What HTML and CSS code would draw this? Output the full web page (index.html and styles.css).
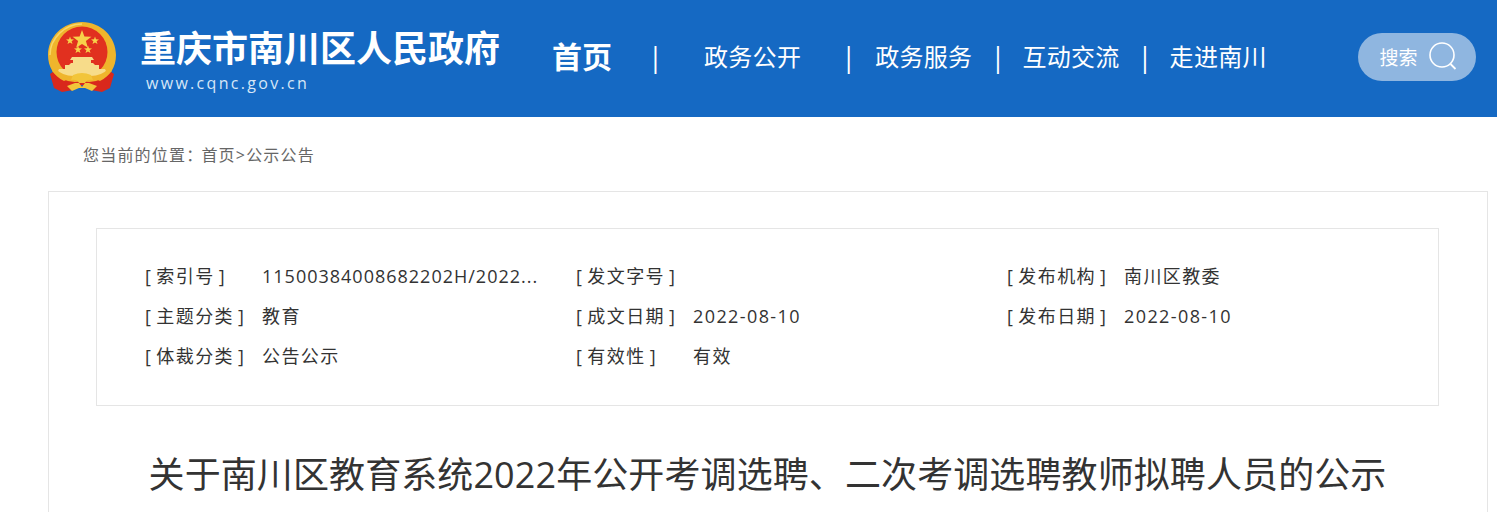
FILE: index.html
```html
<!DOCTYPE html>
<html lang="zh-CN">
<head>
<meta charset="utf-8">
<title>关于南川区教育系统2022年公开考调选聘、二次考调选聘教师拟聘人员的公示</title>
<link rel="stylesheet" href="styles.css">
</head>
<body>
<header class="header">
  <a class="brand">
    <svg class="emblem" viewBox="0 0 70 72" width="70" height="72" aria-hidden="true">
      <path d="M10 48 L3 53 L7 67 L15 71 L26 69 L35 64 L44 69 L55 71 L63 67 L67 53 L60 48 Z" fill="#d9281c"/>
      <path d="M35 1 C16 1 1 16 1 34 C1 46 7 55 17 60 L26 56 L44 56 L53 60 C63 55 69 46 69 34 C69 16 54 1 35 1Z" fill="#efb52c"/>
      <path d="M35 3 C18 3 3 17 3 34" fill="none" stroke="#f8d768" stroke-width="1.5"/>
      <circle cx="35" cy="31" r="25.5" fill="#e1301f"/>
      <path d="M35 9 l2.4 6.6 7 .2-5.5 4.3 2 6.7-5.9-3.9-5.9 3.9 2-6.7-5.5-4.3 7-.2z" fill="#f7d24a"/>
      <path d="M23 15.500 l1 2.800 3 .1-2.400 1.800 .9 2.900-2.500-1.700-2.500 1.700 .9-2.900-2.400-1.800 3-.1z" fill="#f7d24a"/>
      <path d="M48 15.500 l1 2.800 3 .1-2.400 1.800 .9 2.900-2.500-1.700-2.500 1.700 .9-2.900-2.400-1.800 3-.1z" fill="#f7d24a"/>
      <path d="M31 24.500 l1 2.800 3 .1-2.400 1.800 .9 2.900-2.500-1.700-2.500 1.700 .9-2.900-2.400-1.800 3-.1z" fill="#f7d24a"/>
      <path d="M41 24.500 l1 2.800 3 .1-2.400 1.800 .9 2.900-2.500-1.700-2.500 1.700 .9-2.900-2.400-1.800 3-.1z" fill="#f7d24a"/>
      <path d="M25 36 H45 L47 39 H44 V42 H46 L48 44 H52 V48 H58 L60 52 L52 56 H18 L10 52 L12 48 H18 V44 H22 L24 42 H26 V39 H23Z" fill="#f7dc8a"/>
      <path d="M8 47 Q18 58 35 54 Q52 58 62 47 L65 50 Q52 64 35 60 Q18 64 5 50Z" fill="#efb52c"/>
      <path d="M26 54 Q35 50 44 54 L46 59 Q40 58 38 62 H32 Q30 58 24 59Z" fill="#f2c53a"/>
      <path d="M20 65 L28 62 L32 62 L35 66 L38 62 L42 62 L50 65 L45 70 L38 67 H32 L25 70Z" fill="#f2c53a"/>
    </svg>
    <div class="brand-text">
      <div class="brand-name">重庆市南川区人民政府</div>
      <div class="brand-url">www.cqnc.gov.cn</div>
    </div>
  </a>
  <nav class="nav">
    <a class="nav-home">首页</a>
    <span class="sep sep-a">|</span>
    <a>政务公开</a>
    <span class="sep sep-b">|</span>
    <a>政务服务</a>
    <span class="sep">|</span>
    <a>互动交流</a>
    <span class="sep">|</span>
    <a>走进南川</a>
  </nav>
  <div class="search">
    <span>搜索</span>
    <svg viewBox="0 0 30 30" width="30" height="30" aria-hidden="true">
      <circle cx="14" cy="13" r="12" fill="none" stroke="#fff" stroke-width="1.6"/>
      <path d="M22.500 22 L27.500 27" stroke="#fff" stroke-width="1.800" fill="none"/>
    </svg>
  </div>
</header>
<div class="crumb">您当前的位置：<span class="crumb-links">首页&gt;公示公告</span></div>
<main class="panel">
  <section class="meta">
    <div class="meta-item"><span class="label">[ 索引号 ]</span><span class="value value-code">11500384008682202H/2022...</span></div>
    <div class="meta-item"><span class="label">[ 发文字号 ]</span><span class="value"></span></div>
    <div class="meta-item"><span class="label">[ 发布机构 ]</span><span class="value">南川区教委</span></div>
    <div class="meta-item"><span class="label">[ 主题分类 ]</span><span class="value">教育</span></div>
    <div class="meta-item"><span class="label">[ 成文日期 ]</span><span class="value">2022-08-10</span></div>
    <div class="meta-item"><span class="label">[ 发布日期 ]</span><span class="value">2022-08-10</span></div>
    <div class="meta-item"><span class="label">[ 体裁分类 ]</span><span class="value">公告公示</span></div>
    <div class="meta-item"><span class="label">[ 有效性 ]</span><span class="value">有效</span></div>
  </section>
  <h1 class="title">关于南川区教育系统2022年公开考调选聘、二次考调选聘教师拟聘人员的公示</h1>
</main>
</body>
</html>
```
FILE: styles.css
```css
* { box-sizing: border-box; }
html, body { margin: 0; padding: 0; height: 512px; overflow: hidden; background: #fff; }
body { font-family: "Open Sans", "Noto Sans CJK SC", sans-serif; color: #333; }

.header { height: 117px; background: #1569c3; color: #fff; display: flex; align-items: center; padding: 0 21px 4px 47px; }
.brand { display: flex; align-items: center; width: 505px; flex: none; margin-top: 4px; }
.emblem { flex: none; margin-bottom: 3px; }
.brand-text { margin-left: 24px; margin-top: 2px; }
.brand-name { font-size: 36px; font-weight: 700; line-height: 44px; white-space: nowrap; margin-left: -1px; }
.brand-url { font-size: 16px; line-height: 20px; letter-spacing: 2.3px; color: #d6e6f7; margin-left: 5px; margin-top: 2px; }

.nav { display: flex; align-items: center; flex: 1; margin-top: 1px; font-size: 24px; line-height: 32px; letter-spacing: 0.3px; white-space: nowrap; }
.nav-home { font-size: 30px; font-weight: 700; letter-spacing: 0; }
.sep { width: 10px; text-align: center; margin: 0 22px 0 18px; font-size: 27px; font-weight: 500; }
.sep-a { margin: 0 46px 0 36px; }
.sep-b { margin: 0 24px 0 40px; }

.search { flex: none; width: 118px; height: 48px; border-radius: 24px; background: #8fb6e0; display: flex; align-items: center; justify-content: center; gap: 10px; padding-left: 3px; font-size: 19px; }

.crumb { padding-left: 83px; height: 74px; line-height: 76px; font-size: 16px; letter-spacing: 1.2px; color: #666; white-space: nowrap; }
.crumb-links { margin-left: -2px; }

.panel { margin: 0 9px 0 48px; height: 321px; border: 1px solid #e5e5e5; border-bottom: 0; padding: 36px 48px 0 47px; }
.meta { border: 1px solid #e5e5e5; height: 178px; padding: 27px 48px 0; display: grid; grid-template-columns: repeat(3, 431px); grid-auto-rows: 40px; font-size: 18px; letter-spacing: 1.4px; }
.meta-item { display: flex; line-height: 40px; color: #333; white-space: nowrap; }
.label { width: 117px; flex: none; word-spacing: -2px; }
.value { width: 280px; }
.value-code { letter-spacing: 1px; }

.title { margin: 47px 0 0; text-align: center; font-size: 36px; font-weight: 400; line-height: 44px; letter-spacing: 0.1px; color: #333; white-space: nowrap; }
```
